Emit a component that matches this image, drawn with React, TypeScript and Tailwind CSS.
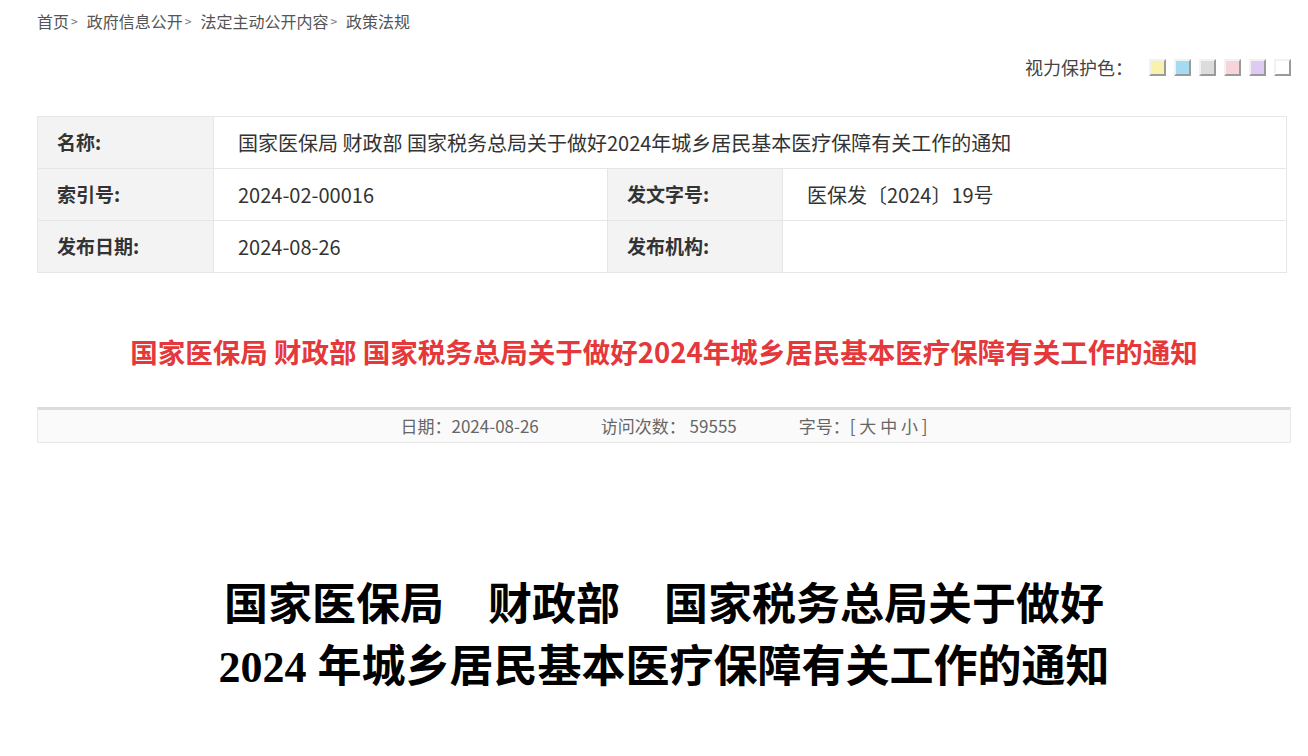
const SANS = "font-['Noto_Sans_CJK_SC',sans-serif]";

const CRUMBS = ["首页", "政府信息公开", "法定主动公开内容", "政策法规"];

const SWATCHES = ["#f7f3ad", "#a5daf3", "#dcdcdc", "#f7d3da", "#dfcaf3", "#ffffff"];

function Breadcrumb() {
  return (
    <div className="mt-[10px] flex h-[22px] items-center text-[16px] leading-[22px] text-[#555]">
      {CRUMBS.map((c, i) => (
        <span key={c} className="flex items-center">
          {c}
          {i < CRUMBS.length - 1 && <span className="ml-[2px] mr-[9px] text-[12px] text-[#777]">&gt;</span>}
        </span>
      ))}
    </div>
  );
}

function ColorPicker() {
  return (
    <div className="mt-[23px] flex h-6 items-center justify-end text-[18px] text-[#444]">
      <span className="mr-[16px]">视力保护色：</span>
      <div className="flex gap-2">
        {SWATCHES.map((c) => (
          <span
            key={c}
            className="h-[17px] w-[17px] border-2 border-t-[#f2f2f2] border-l-[#f2f2f2] border-r-[#9a9a9a] border-b-[#9a9a9a]"
            style={{ backgroundColor: c }}
          />
        ))}
      </div>
    </div>
  );
}

function Label({ children }: { children: React.ReactNode }) {
  return (
    <div className="flex items-center bg-[#f3f3f3] pl-[19px] text-[19px] font-bold text-[#333]">{children}</div>
  );
}

function Value({ children, span }: { children?: React.ReactNode; span?: boolean }) {
  return (
    <div className={`flex items-center bg-white pl-[24px] text-[20px] text-[#333] ${span ? "col-span-3" : ""}`}>
      {children}
    </div>
  );
}

function InfoTable() {
  return (
    <div className="mt-[37px] grid w-[1250px] grid-cols-[175px_393px_174px_1fr] auto-rows-[51px] gap-px border border-[#e6e6e6] bg-[#e6e6e6]">
      <Label>名称:</Label>
      <Value span>国家医保局 财政部 国家税务总局关于做好2024年城乡居民基本医疗保障有关工作的通知</Value>
      <Label>索引号:</Label>
      <Value>2024-02-00016</Value>
      <Label>发文字号:</Label>
      <Value>医保发〔2024〕19号</Value>
      <Label>发布日期:</Label>
      <Value>2024-08-26</Value>
      <Label>发布机构:</Label>
      <Value />
    </div>
  );
}

function MetaBar() {
  return (
    <div className="mt-9 flex h-9 items-center justify-center gap-[62px] border border-t-[3px] border-[#e8e8e8] border-t-[#dcdcdc] bg-[#fafafa] pb-px text-[17px] text-[#666]">
      <span>日期：2024-08-26</span>
      <span>访问次数： 59555</span>
      <span>字号：[ 大 中 小 ]</span>
    </div>
  );
}

export default function App() {
  return (
    <div className={`min-h-[756px] bg-white ${SANS}`}>
      <div className="ml-[37px] mr-[17px]">
        <Breadcrumb />
        <ColorPicker />
        <InfoTable />
        <h1 className="mt-[58px] text-center text-[27.5px] font-bold leading-10 text-[#e5383a]">
          国家医保局 财政部 国家税务总局关于做好2024年城乡居民基本医疗保障有关工作的通知
        </h1>
        <MetaBar />
        <div className="mt-[132px] text-center font-['Liberation_Serif','Noto_Sans_CJK_SC',serif] text-[44px] font-bold leading-[62px] text-black">
          <p>国家医保局　财政部　国家税务总局关于做好</p>
          <p>2024 年城乡居民基本医疗保障有关工作的通知</p>
        </div>
      </div>
    </div>
  );
}
